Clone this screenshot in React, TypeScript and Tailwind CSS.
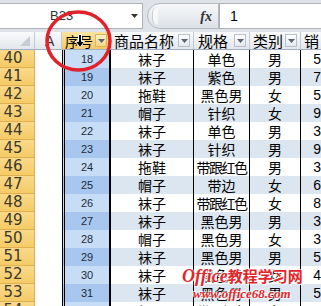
import React from 'react'

type Row = { n: number; id: number; name: string; spec: string; cat: string; sales: string }

const rows: Row[] = [
  { n: 40, id: 18, name: '袜子', spec: '单色', cat: '男', sales: '58' },
  { n: 41, id: 19, name: '袜子', spec: '紫色', cat: '男', sales: '72' },
  { n: 42, id: 20, name: '拖鞋', spec: '黑色男', cat: '女', sales: '55' },
  { n: 43, id: 21, name: '帽子', spec: '针织', cat: '女', sales: '90' },
  { n: 44, id: 22, name: '袜子', spec: '单色', cat: '男', sales: '36' },
  { n: 45, id: 23, name: '袜子', spec: '针织', cat: '男', sales: '94' },
  { n: 46, id: 24, name: '拖鞋', spec: '带跟红色', cat: '男', sales: '33' },
  { n: 47, id: 25, name: '帽子', spec: '带边', cat: '女', sales: '68' },
  { n: 48, id: 26, name: '袜子', spec: '带跟红色', cat: '女', sales: '81' },
  { n: 49, id: 27, name: '袜子', spec: '黑色男', cat: '男', sales: '37' },
  { n: 50, id: 28, name: '帽子', spec: '黑色男', cat: '女', sales: '35' },
  { n: 51, id: 29, name: '袜子', spec: '黑色男', cat: '男', sales: '52' },
  { n: 52, id: 30, name: '袜子', spec: '黑色男', cat: '女', sales: '44' },
  { n: 53, id: 31, name: '袜子', spec: '黑色男', cat: '男', sales: '57' },
  { n: 54, id: 32, name: '帽子', spec: '带跟红色', cat: '女', sales: '61' },
]

const cjk = "font-['Noto_Sans_CJK_SC','Noto_Sans',sans-serif]"

function FilterButton({ active }: { active?: boolean }) {
  return (
    <span
      className={
        'ml-auto mr-[3px] flex h-[13px] w-[12px] shrink-0 items-center justify-center border ' +
        (active
          ? 'border-[#d9b45a] bg-gradient-to-b from-[#fdf0c8] to-[#f4d58a]'
          : 'border-[#b9bfc8] bg-gradient-to-b from-white to-[#e4e8ee]')
      }
    >
      <svg width="7" height="4" viewBox="0 0 7 4">
        <path d="M0 0h7L3.5 4z" fill="#5b6470" />
      </svg>
    </span>
  )
}

export default function App() {
  return (
    <div className="relative h-[306px] w-[321px] overflow-hidden bg-white">
      {/* Formula bar */}
      <div className="flex h-[32px] items-start bg-[#dfe3e9] pt-[3px]">
        <div className="flex h-[26px] w-[143px] shrink-0 items-center border border-l-0 border-[#a9b0ba] bg-white">
          <span className="ml-[50px] font-['Liberation_Sans',sans-serif] text-[13px] text-[#333]">B23</span>
          <svg className="ml-auto mr-[4px]" width="7" height="4" viewBox="0 0 7 4">
            <path d="M0 0h7L3.5 4z" fill="#333" />
          </svg>
        </div>
        <div className="ml-[4px] flex h-[26px] w-[72px] shrink-0 items-center rounded-l-full border border-[#b3bac4] bg-gradient-to-b from-[#f6f7f9] to-[#dde2e8]">
          <span className="ml-[4px] h-[18px] w-[6px] rounded-l-full border-l border-[#c9ced6] bg-white/60" />
          <span className="ml-auto mr-[6px] font-['Liberation_Serif',serif] text-[14px] font-bold italic text-[#333]">fx</span>
        </div>
        <div className="flex h-[26px] flex-1 items-center border border-r-0 border-[#a9b0ba] bg-white">
          <span className="ml-[10px] font-['Liberation_Sans',sans-serif] text-[14px] text-black">1</span>
        </div>
      </div>

      {/* Column headers */}
      <div className={`flex h-[18px] whitespace-nowrap border-b border-[#9fb0c4] bg-gradient-to-b from-[#f9fafb] to-[#e3e7ed] text-[15px] leading-none text-black ${cjk}`}>
        <div className="relative w-[35px] shrink-0 border-r border-[#c3c9d1]">
          <svg className="absolute right-[4px] bottom-[3px]" width="10" height="10" viewBox="0 0 10 10">
            <path d="M10 0v10H0z" fill="#c6ccd4" />
          </svg>
        </div>
        <div className="flex w-[27px] shrink-0 items-center border-r border-[#c3c9d1] pl-[10px] font-['Liberation_Sans',sans-serif] text-[14px] text-[#333]">A</div>
        <div className="flex w-[49px] shrink-0 items-center border-r border-[#c3c9d1] bg-gradient-to-b from-[#fce39d] to-[#f4c869] pl-[3px] text-[14px]">
          序号
          <FilterButton active />
        </div>
        <div className="flex w-[83px] shrink-0 items-center border-r border-[#c3c9d1] pl-[3px]">
          商品名称
          <FilterButton />
        </div>
        <div className="flex w-[56px] shrink-0 items-center border-r border-[#c3c9d1] pl-[4px]">
          规格
          <FilterButton />
        </div>
        <div className="flex w-[51px] shrink-0 items-center border-r border-[#c3c9d1] pl-[3px]">
          类别
          <FilterButton />
        </div>
        <div className="flex flex-1 items-center pl-[3px]">销</div>
      </div>

      {/* Rows */}
      {rows.map((r, i) => {
        const band = i % 2 === 1
        const bg = band ? 'bg-[#dce6f1]' : 'bg-white'
        return (
          <div key={r.n} className={`flex h-[18px] whitespace-nowrap leading-none ${cjk}`}>
            <div className="flex w-[35px] shrink-0 items-center border-r border-b border-[#dfb04f] bg-gradient-to-b from-[#f9d98a] to-[#f5cb66]">
              <span className="w-[26px] text-center font-['DejaVu_Sans',sans-serif] text-[15px] text-[#3d3a2c]">{r.n}</span>
            </div>
            <div className="w-[27px] shrink-0 bg-white" />
            <div
              className={
                'flex w-[49px] shrink-0 items-center justify-center border-l-[3px] border-r-2 border-double border-l-black border-r-black font-["Liberation_Sans",sans-serif] text-[11px] text-[#1d2a3a] ' +
                (band ? 'bg-[#a8c7ee]' : 'bg-[#c7ddf6]')
              }
            >
              {r.id}
            </div>
            <div className={'flex w-[83px] shrink-0 items-center justify-center border-r border-black text-[14px] ' + bg}>
              {r.name}
            </div>
            <div className={'flex w-[56px] shrink-0 items-center justify-center overflow-hidden border-r border-black text-[14px] ' + bg}>
              <span className={r.spec.length > 3 ? 'tracking-[-1.5px]' : ''}>{r.spec}</span>
            </div>
            <div className={'flex w-[51px] shrink-0 items-center justify-center border-r border-black text-[14px] ' + bg}>
              {r.cat}
            </div>
            <div className={"flex w-[40px] shrink-0 items-center justify-center font-['Liberation_Sans',sans-serif] text-[14px] " + bg}>
              {r.sales}
            </div>
          </div>
        )
      })}

      {/* Column-select cursor */}
      <svg className="absolute left-[75px] top-[34px]" width="10" height="15" viewBox="0 0 10 15">
        <path d="M3.5 0.5h3v7h3L5 13.5 0.5 7.5h3z" fill="#000" stroke="#fff" strokeWidth="1" />
      </svg>

      {/* Red annotation circle */}
      <svg className="pointer-events-none absolute left-[44px] top-[9px]" width="70" height="65" viewBox="0 0 70 65">
        <ellipse cx="34.5" cy="32" rx="31.5" ry="29" fill="none" stroke="#e0232b" strokeWidth="3.5" />
      </svg>

      {/* Watermark */}
      <div className="pointer-events-none absolute left-[182px] top-[267px] flex flex-col items-start whitespace-nowrap leading-none">
        <div className="flex items-baseline text-[#e3262b] [text-shadow:0_0_2px_#fff,1px_1px_1px_#fff,-1px_-1px_1px_#fff]">
          <span className="font-['Liberation_Serif',serif] text-[18px] font-bold italic">Office</span>
          <span className={`${cjk} text-[15px] font-bold`}>教程学习网</span>
        </div>
        <div className="ml-[11px] mt-[2px] font-['Liberation_Serif',serif] text-[13px] font-bold italic text-[#e3262b] [text-shadow:0_0_2px_#fff,1px_1px_1px_#fff,-1px_-1px_1px_#fff]">
          www.office68.com
        </div>
      </div>
    </div>
  )
}
